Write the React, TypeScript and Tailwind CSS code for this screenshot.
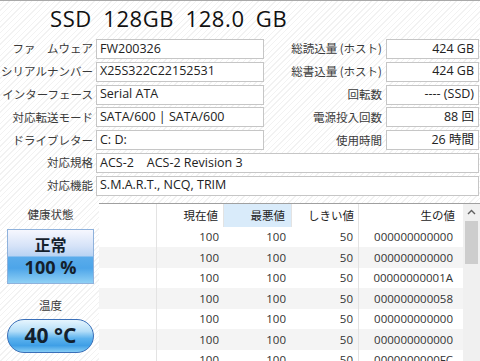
import React from "react";

const jp = "font-['Noto_Sans_CJK_JP',sans-serif]";
const lat = "font-['Open_Sans','Noto_Sans_CJK_JP',sans-serif]";

const infoRows = [
	["ファ　ムウェア", "FW200326", "総読込量 (ホスト)", "424 GB"],
	["シリアルナンバー", "X25S322C22152531", "総書込量 (ホスト)", "424 GB"],
	["インターフェース", "Serial ATA", "回転数", "---- (SSD)"],
	["対応転送モード", "SATA/600 | SATA/600", "電源投入回数", "88 回"],
	["ドライブレター", "C: D:", "使用時間", "26 時間"],
];

const smart = [
	["100", "100", "50", "000000000000"],
	["100", "100", "50", "000000000000"],
	["100", "100", "50", "00000000001A"],
	["100", "100", "50", "000000000058"],
	["100", "100", "50", "000000000000"],
	["100", "100", "50", "000000000000"],
	["100", "100", "50", "0000000000FC"],
];

function Label({ text, w }: { text: string; w: string }) {
	return (
		<div className={`${w} ${jp} shrink-0 text-right text-[11.5px] text-[#3a3a3a] whitespace-nowrap`}>
			{text}
		</div>
	);
}

function Field({ text, right, className }: { text: string; right?: boolean; className: string }) {
	return (
		<div
			className={`${className} ${lat} h-[20px] shrink-0 flex items-center border border-[#c6c6c6] bg-white px-[3px] text-[12.5px] text-[#222] whitespace-pre ${
				right ? "justify-end" : ""
			}`}>
			{text}
		</div>
	);
}

export default function App() {
	return (
		<div className="w-[480px] h-[361px] overflow-hidden flex flex-col bg-[repeating-linear-gradient(135deg,#ffffff_0px,#ffffff_3px,#f2f2f2_3px,#f2f2f2_4px)]">
			<div className="h-px shrink-0 bg-[#a9a9a9]" />
			<div className={`h-[35px] shrink-0 flex items-center pl-[50px] text-[22px] tracking-[0.6px] [word-spacing:5px] text-[#111] ${lat}`}>
				SSD 128GB 128.0 GB
			</div>
			<div className="mt-[3px] flex flex-col gap-[2.8px]">
				{infoRows.map(([l1, v1, l2, v2]) => (
					<div key={l1} className="flex items-center h-[20px]">
						<Label text={l1} w="w-[96px] pr-[3px]" />
						<Field text={v1} className="w-[168px]" />
						<Label text={l2} w="w-[122px] pr-[4px]" />
						<Field text={v2} right className="w-[93px] pr-[4px]" />
					</div>
				))}
				<div className="flex items-center h-[20px]">
					<Label text="対応規格" w="w-[96px] pr-[3px]" />
					<Field text="ACS-2    ACS-2 Revision 3" className="w-[383px]" />
				</div>
				<div className="flex items-center h-[20px]">
					<Label text="対応機能" w="w-[96px] pr-[3px]" />
					<Field text="S.M.A.R.T., NCQ, TRIM" className="w-[383px]" />
				</div>
			</div>

			<div className="mt-[7px] flex flex-1 min-h-0">
				<div className="w-[99px] shrink-0 flex flex-col pl-[7px]">
					<div className={`w-[87px] h-[24px] flex items-center justify-center text-[11.5px] text-[#3a3a3a] ${jp}`}>
						健康状態
					</div>
					<div className="mt-[2px] w-[87px] h-[55px] border border-[#8fb2dc] bg-[linear-gradient(to_bottom,#f6f7fe_0%,#d6e3f8_30%,#b9d3f3_49%,#5aaceb_51%,#4da5e9_72%,#8fd0f5_100%)] flex flex-col items-center justify-center text-[#14202c] font-bold">
						<div className={`text-[16px] leading-[22px] ${jp}`}>正常</div>
						<div className={`text-[18px] leading-[24px] ${lat}`}>100 %</div>
					</div>
					<div className={`mt-[11px] w-[87px] h-[22px] flex items-center justify-center text-[11.5px] text-[#3a3a3a] ${jp}`}>
						温度
					</div>
					<div className={`mt-[2px] w-[87px] h-[34px] rounded-full border border-[#3a6fb8] bg-[linear-gradient(to_bottom,#e6f5fe_0%,#b4def8_35%,#5bb2ee_58%,#3f9fe6_80%,#86cdf5_100%)] flex items-center justify-center text-[21px] font-bold text-[#12202e] ${lat}`}>
						40 °C
					</div>
				</div>

				<div className="w-[381px] shrink-0 flex border-t border-[#a0a0a0] bg-white">
					<div className="w-[364px] flex flex-col">
						<div className={`grid grid-cols-[58px_67px_68px_67px_104px] h-[23px] shrink-0 text-[11.5px] text-[#222] ${jp}`}>
							<div className="border-r border-[#e3e3e3]" />
							<div className="border-r border-[#e3e3e3] flex items-center justify-end pr-[5px]">現在値</div>
							<div className="border-r border-[#e3e3e3] bg-[#d9ebfa] flex items-center justify-end pr-[6px]">最悪値</div>
							<div className="border-r border-[#e3e3e3] flex items-center justify-end pr-[4px]">しきい値</div>
							<div className="flex items-center justify-end pr-[8px]">生の値</div>
						</div>
						{smart.map((r, i) => (
							<div
								key={i}
								className={`grid grid-cols-[58px_67px_68px_67px_104px] h-[20.5px] shrink-0 text-[11.5px] text-[#333] ${lat} ${
									i % 2 === 1 ? "bg-[#f4f4f4]" : ""
								}`}>
								<div className="border-r border-[#e3e3e3]" />
								<div className="flex items-center justify-end pr-[5px]">{r[0]}</div>
								<div className="flex items-center justify-end pr-[6px]">{r[1]}</div>
								<div className="border-r border-[#e3e3e3] flex items-center justify-end pr-[5px]">{r[2]}</div>
								<div className="flex items-center justify-end pr-[10px]">{r[3]}</div>
							</div>
						))}
					</div>
					<div className="w-[17px] bg-[#f0f0f0] flex flex-col items-center">
						<div className="h-[17px] w-full flex items-center justify-center">
							<svg width="9" height="6" viewBox="0 0 9 6">
								<polyline points="1,5 4.5,1.5 8,5" fill="none" stroke="#606060" strokeWidth="1.4" />
							</svg>
						</div>
						<div className="w-[13px] h-[43px] bg-[#cdcdcd]" />
					</div>
				</div>
			</div>
		</div>
	);
}
